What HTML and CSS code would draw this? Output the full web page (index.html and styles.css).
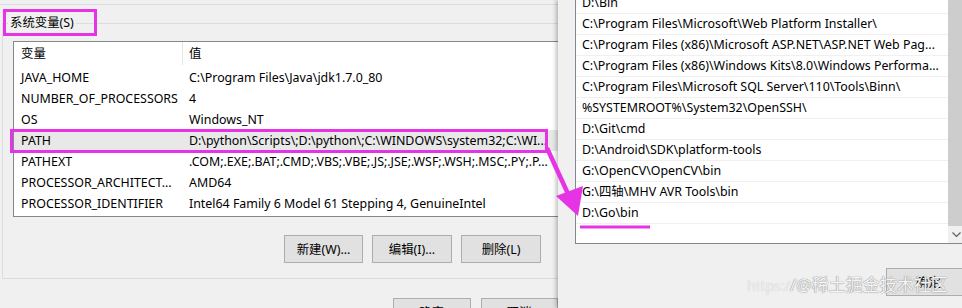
FILE: index.html
```html
<!DOCTYPE html>
<html lang="zh-CN">

<head>
    <meta charset="UTF-8" />
    <title>环境变量</title>
    <link rel="stylesheet" href="styles.css">
</head>

<body>
    <div class="screen">
        <div class="dlg-left">
            <div class="top-strip"></div>
            <fieldset class="group">
                <legend>系统变量(S)</legend>
                <div class="listview">
                    <div class="lv-head">
                        <div class="col-name">变量</div>
                        <div class="col-val">值</div>
                    </div>
                    <div class="lv-row">
                        <div class="col-name">JAVA_HOME</div>
                        <div class="col-val">C:\Program Files\Java\jdk1.7.0_80</div>
                    </div>
                    <div class="lv-row">
                        <div class="col-name">NUMBER_OF_PROCESSORS</div>
                        <div class="col-val">4</div>
                    </div>
                    <div class="lv-row">
                        <div class="col-name">OS</div>
                        <div class="col-val">Windows_NT</div>
                    </div>
                    <div class="lv-row sel">
                        <div class="col-name">PATH</div>
                        <div class="col-val">D:\python\Scripts\;D:\python\;C:\WINDOWS\system32;C:\WI...</div>
                    </div>
                    <div class="lv-row">
                        <div class="col-name">PATHEXT</div>
                        <div class="col-val">.COM;.EXE;.BAT;.CMD;.VBS;.VBE;.JS;.JSE;.WSF;.WSH;.MSC;.PY;.P...</div>
                    </div>
                    <div class="lv-row">
                        <div class="col-name">PROCESSOR_ARCHITECT...</div>
                        <div class="col-val">AMD64</div>
                    </div>
                    <div class="lv-row">
                        <div class="col-name">PROCESSOR_IDENTIFIER</div>
                        <div class="col-val">Intel64 Family 6 Model 61 Stepping 4, GenuineIntel</div>
                    </div>
                </div>
                <div class="group-buttons">
                    <button class="btn w79">新建(W)...</button>
                    <button class="btn w80">编辑(I)...</button>
                    <button class="btn w80">删除(L)</button>
                </div>
            </fieldset>
            <div class="dlg-buttons">
                <button class="btn w85">确定</button>
                <button class="btn w85">取消</button>
            </div>
        </div>

        <div class="dlg-right">
            <div class="pathlist">
                <div class="pl-items">
                    <div class="pl-row">D:\Bin</div>
                    <div class="pl-row">C:\Program Files\Microsoft\Web Platform Installer\</div>
                    <div class="pl-row">C:\Program Files (x86)\Microsoft ASP.NET\ASP.NET Web Pag...</div>
                    <div class="pl-row">C:\Program Files (x86)\Windows Kits\8.0\Windows Performa...</div>
                    <div class="pl-row">C:\Program Files\Microsoft SQL Server\110\Tools\Binn\</div>
                    <div class="pl-row">%SYSTEMROOT%\System32\OpenSSH\</div>
                    <div class="pl-row">D:\Git\cmd</div>
                    <div class="pl-row">D:\Android\SDK\platform-tools</div>
                    <div class="pl-row">G:\OpenCV\OpenCV\bin</div>
                    <div class="pl-row">G:\四轴\MHV AVR Tools\bin</div>
                    <div class="pl-row">D:\Go\bin</div>
                </div>
                <div class="pl-scroll">
                    <div class="thumb"></div>
                    <div class="arrow">
                        <svg width="9" height="6" viewBox="0 0 9 6"><polyline points="0.5,0.5 4.5,4.5 8.5,0.5" fill="none" stroke="#606060" stroke-width="1.2"/></svg>
                    </div>
                </div>
            </div>
            <div class="right-buttons">
                <button class="btn w85">确定</button>
            </div>
            <div class="watermark"><span class="wm-url">https:/</span>/@稀土掘金技术社区</div>
        </div>

        <!-- annotation layer -->
        <svg class="annot" width="962" height="308" viewBox="0 0 962 308">
            <rect x="4.5" y="10.5" width="91" height="24" fill="none" stroke="#e633e6" stroke-width="3"/>
            <rect x="11.5" y="130.5" width="535" height="21" fill="none" stroke="#e633e6" stroke-width="3"/>
            <line x1="547" y1="148" x2="569" y2="196" stroke="#e633e6" stroke-width="4.5"/>
            <polygon points="556,196 583,186 578,216" fill="#e633e6"/>
            <line x1="580" y1="227" x2="650" y2="227" stroke="#e633e6" stroke-width="3"/>
        </svg>
    </div>
</body>

</html>
```

FILE: styles.css
```css
html,
body {
    margin: 0;
    padding: 0;
}

body {
    font-family: "Noto Sans", "Noto Sans CJK SC", sans-serif;
    font-size: 12.4px;
    color: #000;
    background-color: #f0f0f0;
}

.screen {
    position: relative;
    display: flex;
    width: 962px;
    height: 308px;
    overflow: hidden;
}

/* left dialog */

.dlg-left {
    width: 558px;
    flex: none;
    overflow: hidden;
}

.top-strip {
    height: 4px;
    border-bottom: 1px solid #dcdcdc;
}

.group {
    margin: 10px 0 0 2px;
    padding: 10px 0 15px 10px;
    border: 1px solid #dcdcdc;
    border-right: none;
    min-width: 0;
}

.group legend {
    margin-left: -5px;
    padding: 0 2px;
    line-height: 16px;
}

.listview {
    width: 600px;
    height: 174px;
    border: 1px solid #828790;
    background: #fff;
}

.lv-head,
.lv-row {
    display: flex;
    white-space: nowrap;
}

.lv-head {
    height: 25px;
    line-height: 23px;
}

.lv-head .col-name {
    border-right: 1px solid #e5e5e5;
    height: 23px;
}

.lv-row {
    height: 21px;
    line-height: 21px;
}

.lv-row.sel {
    background: #e8e8e8;
}

.col-name {
    width: 169px;
    flex: none;
    box-sizing: border-box;
    padding-left: 7px;
    overflow: hidden;
}

.col-val {
    flex: 1;
    padding-left: 6px;
    overflow: hidden;
}

.btn {
    height: 28px;
    padding: 0;
    box-sizing: border-box;
    background: #e1e1e1;
    border: 1px solid #adadad;
    font: inherit;
    color: #000;
}

.w79 { width: 79px; }
.w80 { width: 80px; }
.w85 { width: 85px; }

.group-buttons {
    display: flex;
    gap: 9px;
    margin-top: 18px;
    padding-left: 271px;
}

.dlg-buttons {
    display: flex;
    gap: 10px;
    margin-top: 19px;
    padding-left: 393px;
}

/* right dialog */

.dlg-right {
    position: relative;
    z-index: 1;
    flex: 1;
    padding-left: 17px;
    background: #f0f0f0;
    box-shadow: -2px 0 4px rgba(0, 0, 0, 0.25);
}

.pathlist {
    display: flex;
    width: 391px;
    height: 252px;
    margin-top: -8px;
    box-sizing: border-box;
    border: 1px solid #828790;
    background: #fff;
}

.pl-items {
    flex: 1;
    min-width: 0;
}

.pl-row {
    height: 21px;
    box-sizing: border-box;
    padding-left: 6px;
    line-height: 20px;
    border-bottom: 1px solid #f0f0f0;
    white-space: nowrap;
    overflow: hidden;
}

.pl-scroll {
    width: 17px;
    display: flex;
    flex-direction: column;
    background: #f0f0f0;
}

.pl-scroll .thumb {
    flex: 1;
    background: #cdcdcd;
}

.pl-scroll .arrow {
    height: 17px;
    display: flex;
    align-items: center;
    justify-content: center;
}

.right-buttons {
    margin-top: 24px;
    padding-left: 311px;
}

.watermark {
    position: absolute;
    left: 189px;
    top: 274px;
    font-size: 17px;
    line-height: 22px;
    white-space: nowrap;
    color: rgba(255, 255, 255, 0.92);
    text-shadow: 0 0 1px #8a8a8a, 0 0 1px #8a8a8a;
}

.wm-url {
    font-size: 14px;
    color: rgba(255, 255, 255, 0.75);
    text-shadow: 0 0 1px #b4b4b4;
}

.annot {
    position: absolute;
    left: 0;
    top: 0;
    z-index: 2;
    pointer-events: none;
}
```
